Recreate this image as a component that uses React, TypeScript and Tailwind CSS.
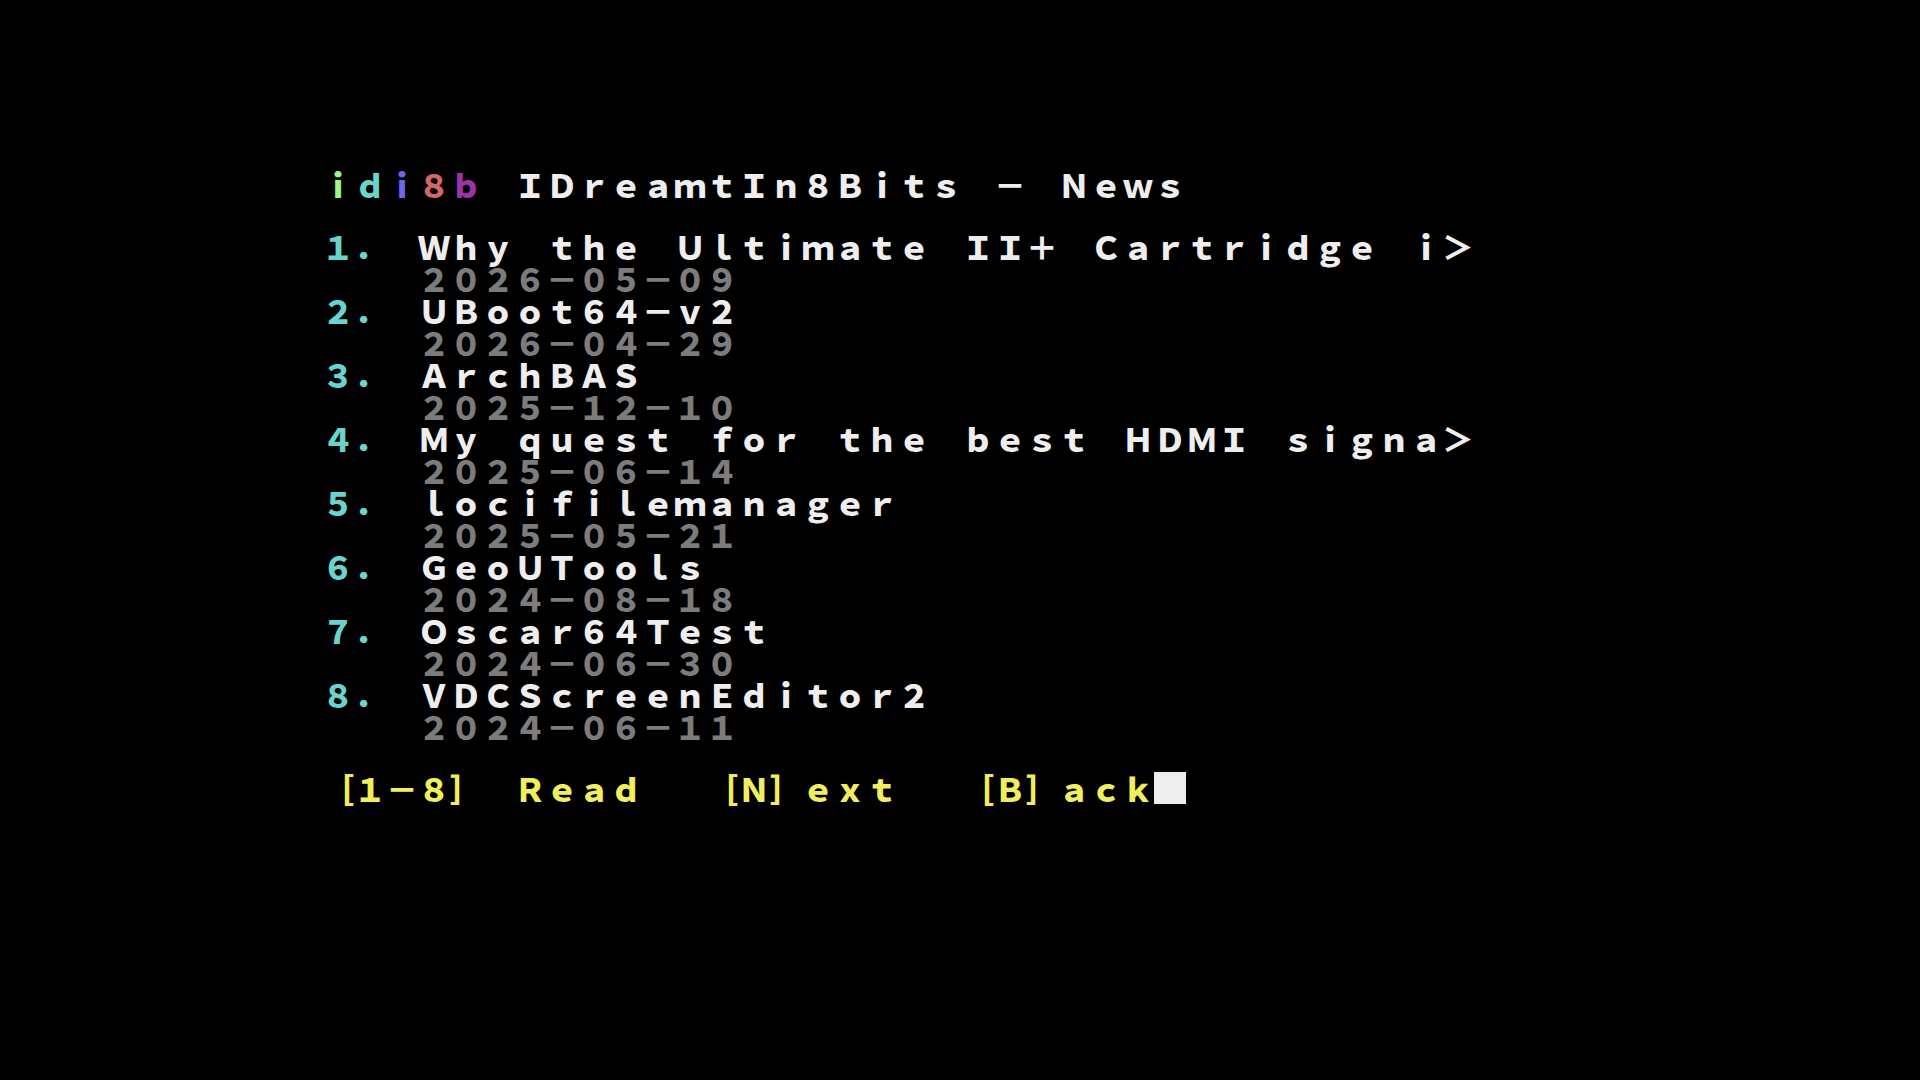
const logo = [
  { char: "i", color: "text-[#a0f48e]" },
  { char: "d", color: "text-[#69d4cd]" },
  { char: "i", color: "text-[#6c68ee]" },
  { char: "8", color: "text-[#d4656a]" },
  { char: "b", color: "text-[#9c34a8]" },
];

const articles = [
  { title: "Why the Ultimate II+ Cartridge i>", date: "2026-05-09" },
  { title: "UBoot64-v2", date: "2026-04-29" },
  { title: "ArchBAS", date: "2025-12-10" },
  { title: "My quest for the best HDMI signa>", date: "2025-06-14" },
  { title: "locifilemanager", date: "2025-05-21" },
  { title: "GeoUTools", date: "2024-08-18" },
  { title: "Oscar64Test", date: "2024-06-30" },
  { title: "VDCScreenEditor2", date: "2024-06-11" },
];

const commands = ["[1-8] Read", "[N]ext", "[B]ack"];

const App = () => {
  return (
    <main className="min-h-screen bg-black px-4 pt-[168px] pb-16 font-['Noto_Sans_CJK_JP','Liberation_Mono',monospace] text-[32px] leading-8 font-black text-[#eeeeee] [font-feature-settings:'fwid','liga'_0]">
      <div className="mx-auto max-w-[1276px]">
        {/* Header */}
        <header className="flex h-8 gap-8 whitespace-pre">
          <div className="flex">
            {logo.map((item, index) => (
              <span key={index} className={item.color}>
                {item.char}
              </span>
            ))}
          </div>
          <h1>IDreamtIn8Bits - News</h1>
        </header>

        {/* Article list */}
        <ol className="mt-[30px]">
          {articles.map((article, index) => (
            <li key={article.title} className="flex h-16 whitespace-pre">
              <span className="w-24 text-[#69d4cd]">{index + 1}.</span>
              <div>
                <a href={`#article-${index + 1}`} className="block h-8">
                  {article.title}
                </a>
                <time dateTime={article.date} className="block h-8 text-[#7c7c7c]">
                  {article.date}
                </time>
              </div>
            </li>
          ))}
        </ol>

        {/* Key prompt */}
        <nav className="mt-[30px] flex h-8 whitespace-pre text-[#f0ee5c]">
          <div className="flex gap-16">
            {commands.map((command) => (
              <button key={command} type="button" className="h-8">
                {command}
              </button>
            ))}
          </div>
          <span className="h-8 w-8 bg-[#eeeeee]" />
        </nav>
      </div>
    </main>
  );
};

export default App;
